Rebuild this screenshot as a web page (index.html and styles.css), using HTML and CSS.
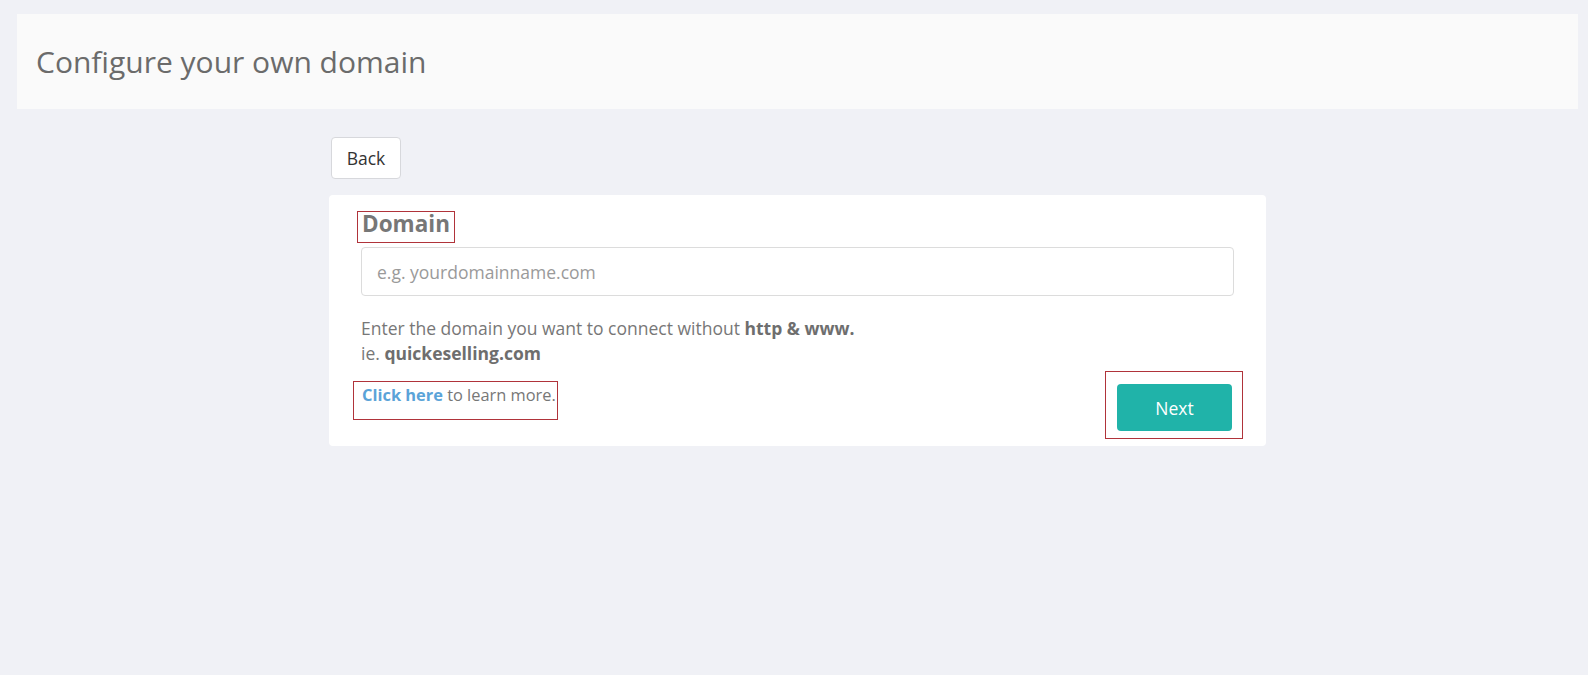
FILE: index.html
```html
<!DOCTYPE html>
<html>
<head>
<meta charset="utf-8">
<link rel="stylesheet" href="styles.css">
</head>
<body>
<div class="page">
  <header class="page-header">
    <h1 class="page-title">Configure your own domain</h1>
  </header>
  <main class="content">
    <button class="btn-back" type="button">Back</button>
    <section class="card">
      <h2 class="card-title"><span class="mark mark-title">Domain</span></h2>
      <input class="domain-input" type="text" placeholder="e.g. yourdomainname.com">
      <p class="help">Enter the domain you want to connect without <b>http &amp; www.</b><br>ie. <b>quickeselling.com</b></p>
      <div class="card-footer">
        <div class="mark mark-link"><a class="link" href="#">Click here</a> to learn more.</div>
        <div class="mark mark-next"><button class="btn-next" type="button">Next</button></div>
      </div>
    </section>
  </main>
</div>
</body>
</html>
```
FILE: styles.css
```css
* { box-sizing: border-box; }
html, body { margin: 0; padding: 0; }
body {
  background: #f0f1f6;
  font-family: "Open Sans", "Noto Sans", sans-serif;
  color: #777;
  width: 1588px;
  height: 675px;
  overflow: hidden;
}
.page { padding: 14px 10px 0 17px; }
.page-header {
  background: #fafafa;
  height: 95px;
  display: flex;
  align-items: center;
  padding-left: 19px;
}
.page-title {
  margin: 0;
  font-weight: 400;
  font-size: 30px;
  color: #6b6b6b;
}
.content {
  margin-left: 312px;
  width: 937px;
  padding-top: 28px;
}
.btn-back {
  display: block;
  margin-left: 2px;
  width: 70px;
  height: 42px;
  background: #fff;
  border: 1px solid #d7d8dc;
  border-radius: 4px;
  font-family: inherit;
  font-size: 17.5px;
  color: #333;
  padding: 0;
}
.card {
  margin-top: 16px;
  background: #fff;
  border-radius: 4px;
  padding: 16px 32px 6px 28px;
  height: 251px;
}
.card-title {
  margin: 0;
  font-size: 22.5px;
  font-weight: 700;
  color: #777;
  line-height: 24px;
  height: 32px;
}
.mark { border: 1px solid #b0333a; }
.mark-title { display: inline-block; padding: 0 4px 6px; line-height: 24px; height: 32px; }
.domain-input {
  display: block;
  margin: 4px 0 0 4px;
  width: 873px;
  height: 49px;
  border: 1px solid #dcdcdc;
  border-radius: 4px;
  padding: 0 15px;
  font-family: inherit;
  font-size: 17.5px;
  color: #555;
  outline: none;
}
.domain-input::placeholder { color: #9a9a9a; }
.help {
  margin: 20px 0 0 4px;
  font-size: 17.5px;
  line-height: 25px;
  color: #777;
}
.help b { color: #6e6e6e; }
.card-footer {
  display: flex;
  justify-content: space-between;
  align-items: flex-start;
  margin-top: 15px;
}
.mark-link {
  margin-left: -4px;
  width: 205px;
  height: 39px;
  padding: 0 0 0 8px;
  font-size: 16.4px;
  line-height: 25px;
  color: #777;
}
.link { color: #5aa3d8; font-weight: 700; text-decoration: none; }
.mark-next {
  margin-top: -10px;
  margin-right: -9px;
  width: 138px;
  height: 68px;
  padding: 12px 0 0 11px;
}
.btn-next {
  width: 115px;
  height: 47px;
  background: #20b3a9;
  border: none;
  border-radius: 4px;
  color: #fff;
  font-family: inherit;
  font-size: 17.5px;
  padding: 0;
}
```
